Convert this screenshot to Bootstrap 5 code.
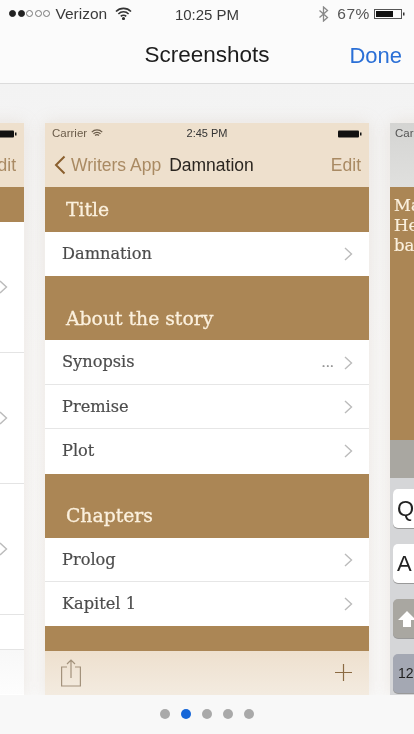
<!DOCTYPE html>
<html lang="en">

<head>
  <meta charset="UTF-8" />
  <meta name="viewport" content="width=device-width, initial-scale=1.0" />
  <title>Screenshots</title>
  <link href="https://cdn.jsdelivr.net/npm/bootstrap@5.3.5/dist/css/bootstrap.min.css" rel="stylesheet">
  <style>
    html, body { height: 100%; }

    body {
      margin: 0;
      background: #f8f8f8;
      font-family: 'Liberation Sans', Arial, sans-serif;
      color: #222;
      overflow: hidden;
    }

    .phone-page { height: 734px; filter: blur(0.45px); }

    /* top of the phone */
    .ios-head { height: 84px; background: #fbfbfb; border-bottom: 1px solid #dcdcdc; }
    .ios-status { height: 27px; padding: 0 9px 0 9px; font-size: 15.5px; color: #3a3a3a; }
    .sig-dot { width: 7px; height: 7px; border-radius: 50%; border: 1px solid #777; margin-right: 1.5px; }
    .sig-dot.on { background: #222; border-color: #222; }
    .ios-time { left: 0; right: 0; top: 4px; text-align: center; font-size: 15px; }
    .ios-title { height: 56px; font-size: 22.5px; color: #1c1c1c; }
    .ios-done { right: 12px; top: 50%; transform: translateY(-50%); font-size: 22px; color: #2a6fd6; text-decoration: none; }
    .batt-txt { font-size: 15.5px; letter-spacing: .6px; color: #555; }

    /* screenshot strip */
    .strip { height: 611px; padding-top: 39px; overflow: hidden; gap: 21px; background: linear-gradient(#f3f3f3, #f8f8f8 45%, #f9f9f9); }
    .shot { width: 324px; height: 572px; flex: 0 0 324px; background: #fff; overflow: hidden; box-shadow: 0 0 16px rgba(190, 165, 135, .22); }
    .shot-head { height: 64px; background: #eee0cd; }
    .shot-status { height: 20px; padding: 1px 7px 0; font-size: 11.5px; color: #6b5c4a; }
    .shot-time { left: 0; right: 0; top: 2px; text-align: center; color: #333; font-size: 11px; }
    .shot-nav { height: 44px; padding: 0 8px; font-size: 17.5px; }
    .shot-back { color: #a98a63; }
    .shot-title { color: #2a2520; }
    .shot-edit { color: #a98a63; }
    .tan-band { background: #ab8655; color: #fbf0dd; font-family: 'DejaVu Serif', serif; font-size: 18.8px; -webkit-text-stroke: .3px #fbf0dd; padding-left: 21px; display: flex; align-items: flex-end; }
    .band-s { height: 45px; padding-bottom: 8px; }
    .band-l { height: 64px; padding-bottom: 7px; }
    .band-e { height: 24.4px; }
    .story-row { height: 44.4px; padding: 0 16px 0 17px; background: #fff; font-family: 'DejaVu Serif', serif; font-size: 16.2px; -webkit-text-stroke: .2px #4c4c4c; color: #4c4c4c; }
    .story-sep { box-shadow: inset 0 -1px 0 #e6e6e6; }
    .story-list .list-group-item { border: 0; border-radius: 0; }
    .shot-foot { height: 44.2px; padding: 0 16px; background: linear-gradient(#eee0ce, #f3ebe0); }
    .more-dots { color: #999; font-size: 13px; margin-right: 10px; }

    /* neighbours */
    .left-band { height: 35px; }
    .left-rows .lr { height: 131px; border-bottom: 1px solid #e4e4e4; padding: 0 16px 0 0; }
    .left-rows .lr-end { height: 35px; border-bottom: 1px solid #e4e4e4; }
    .left-foot { height: 44px; background: linear-gradient(#f8f8f8, #fdfdfd); }
    .right-head { background: linear-gradient(#d4d4d2, #e0e0de); }
    .right-head .shot-status { color: #555; padding-left: 5px; }
    .right-body { background: #ab8655; color: #fbf0dd; height: 253px; font-family: 'DejaVu Serif', serif; font-size: 16.5px; -webkit-text-stroke: .2px #fbf0dd; line-height: 20px; padding: 9px 0 0 4px; }
    .right-grey { height: 38px; background: #a9a7a1; }
    .right-keys { height: 217px; background: #d5d6d8; padding: 11px 0 0 3px; }
    .kb-key { width: 60px; height: 39px; border-radius: 5px; background: #fff; margin-bottom: 16px; font-size: 22px; color: #222; padding-left: 4px; box-shadow: 0 1px 0 #999; }
    .kb-shift { background: #a9a7a1; }
    .kb-num { background: #a4a8b3; font-size: 14px; padding-left: 5px; }

    /* pager */
    .pager { height: 39px; gap: 11px; padding-bottom: 2px; }
    .pg-dot { width: 10px; height: 10px; border-radius: 50%; background: #a9a9a9; }
    .pg-dot.on { background: #1566d8; }
  </style>
</head>

<body>
  <div class="phone-page d-flex flex-column">

    <!-- status + title -->
    <header class="ios-head">
      <div class="ios-status d-flex align-items-center position-relative">
        <span class="sig-dot on"></span><span class="sig-dot on"></span><span class="sig-dot"></span><span class="sig-dot"></span><span class="sig-dot"></span>
        <span class="ms-1">Verizon</span>
        <svg class="ms-2" width="17" height="13" viewBox="0 0 17 13" fill="none" stroke="#333" stroke-width="1.6"><path d="M1 4.5a10.5 10.5 0 0 1 15 0M3.4 7a7 7 0 0 1 10.2 0M5.8 9.4a3.6 3.6 0 0 1 5.4 0"/><circle cx="8.5" cy="11.5" r="0.8" fill="#333"/></svg>
        <span class="ios-time position-absolute">10:25 PM</span>
        <svg class="ms-auto me-2" width="11" height="16" viewBox="0 0 11 16" fill="none" stroke="#888" stroke-width="1.3"><path d="M1.5 4.5l8 7-4 3.5V1l4 3.5-8 7"/></svg>
        <span class="batt-txt me-1">67%</span>
        <svg width="31" height="12" viewBox="0 0 31 12"><rect x="0.5" y="1.5" width="27" height="9" fill="none" stroke="#555"/><rect x="2" y="3" width="17" height="6" fill="#111"/><rect x="29" y="4.5" width="1.5" height="3" fill="#333"/></svg>
      </div>
      <div class="ios-title d-flex align-items-center justify-content-center position-relative">
        Screenshots
        <a class="ios-done position-absolute" href="#">Done</a>
      </div>
    </header>

    <!-- screenshots -->
    <div class="strip d-flex justify-content-center">

      <section class="shot">
        <div class="shot-head">
          <div class="shot-status d-flex align-items-center justify-content-end">
            <svg width="24" height="8" viewBox="0 0 24 8"><rect x="0" y="0.5" width="21" height="7" rx="1" fill="#111"/><rect x="22" y="2.5" width="1.5" height="3" fill="#111"/></svg>
          </div>
          <div class="shot-nav d-flex align-items-center justify-content-end"><span class="shot-edit">Edit</span></div>
        </div>
        <div class="tan-band left-band"></div>
        <div class="left-rows">
          <div class="lr d-flex align-items-center justify-content-end"><svg width="9" height="14" viewBox="0 0 9 14" fill="none" stroke="#bbb" stroke-width="1.4"><path d="M1 1l6.5 6L1 13"/></svg></div>
          <div class="lr d-flex align-items-center justify-content-end"><svg width="9" height="14" viewBox="0 0 9 14" fill="none" stroke="#bbb" stroke-width="1.4"><path d="M1 1l6.5 6L1 13"/></svg></div>
          <div class="lr d-flex align-items-center justify-content-end"><svg width="9" height="14" viewBox="0 0 9 14" fill="none" stroke="#bbb" stroke-width="1.4"><path d="M1 1l6.5 6L1 13"/></svg></div>
          <div class="lr-end"></div>
        </div>
        <div class="left-foot"></div>
      </section>

      <section class="shot">
        <div class="shot-head">
          <div class="shot-status d-flex align-items-center position-relative">
            <span>Carrier</span>
            <svg class="ms-1" width="12" height="9" viewBox="0 0 17 13" fill="none" stroke="#6b5c4a" stroke-width="1.8"><path d="M1 4.5a10.5 10.5 0 0 1 15 0M3.4 7a7 7 0 0 1 10.2 0M5.8 9.4a3.6 3.6 0 0 1 5.4 0"/></svg>
            <span class="shot-time position-absolute">2:45 PM</span>
            <svg class="ms-auto" width="24" height="8" viewBox="0 0 24 8"><rect x="0" y="0.5" width="21" height="7" rx="1" fill="#111"/><rect x="22" y="2.5" width="1.5" height="3" fill="#111"/></svg>
          </div>
          <div class="shot-nav d-flex align-items-center">
            <svg width="14" height="20" viewBox="0 0 14 20" fill="none" stroke="#8a5f2e" stroke-width="2"><path d="M11.5 1.5L3 10l8.5 8.5"/></svg>
            <span class="shot-back ms-1">Writers App</span>
            <span class="shot-title ms-2">Damnation</span>
            <span class="shot-edit ms-auto">Edit</span>
          </div>
        </div>

        <div class="tan-band band-s">Title</div>
        <div class="story-list list-group list-group-flush">
          <div class="list-group-item story-row d-flex align-items-center">Damnation<svg class="ms-auto" width="9" height="14" viewBox="0 0 9 14" fill="none" stroke="#bbb" stroke-width="1.4"><path d="M1 1l6.5 6L1 13"/></svg></div>
        </div>
        <div class="tan-band band-l">About the story</div>
        <div class="story-list list-group list-group-flush">
          <div class="list-group-item story-row story-sep d-flex align-items-center">Synopsis<span class="more-dots ms-auto">...</span><svg width="9" height="14" viewBox="0 0 9 14" fill="none" stroke="#bbb" stroke-width="1.4"><path d="M1 1l6.5 6L1 13"/></svg></div>
          <div class="list-group-item story-row story-sep d-flex align-items-center">Premise<svg class="ms-auto" width="9" height="14" viewBox="0 0 9 14" fill="none" stroke="#bbb" stroke-width="1.4"><path d="M1 1l6.5 6L1 13"/></svg></div>
          <div class="list-group-item story-row d-flex align-items-center">Plot<svg class="ms-auto" width="9" height="14" viewBox="0 0 9 14" fill="none" stroke="#bbb" stroke-width="1.4"><path d="M1 1l6.5 6L1 13"/></svg></div>
        </div>
        <div class="tan-band band-l">Chapters</div>
        <div class="story-list list-group list-group-flush">
          <div class="list-group-item story-row story-sep d-flex align-items-center">Prolog<svg class="ms-auto" width="9" height="14" viewBox="0 0 9 14" fill="none" stroke="#bbb" stroke-width="1.4"><path d="M1 1l6.500 6L1 13"/></svg></div>
          <div class="list-group-item story-row d-flex align-items-center">Kapitel 1<svg class="ms-auto" width="9" height="14" viewBox="0 0 9 14" fill="none" stroke="#bbb" stroke-width="1.4"><path d="M1 1l6.5 6L1 13"/></svg></div>
        </div>
        <div class="tan-band band-e"></div>

        <div class="shot-foot d-flex align-items-center justify-content-between">
          <svg width="20" height="28" viewBox="0 0 20 28" fill="none" stroke="#a3927c" stroke-width="1.2"><path d="M6 8H.6v19h18.800V8H14M10 19V1M6 5l4-4 4 4"/></svg>
          <svg width="19" height="19" viewBox="0 0 19 19" fill="none" stroke="#8a6a42" stroke-width="1.2"><path d="M9.5 1v17M1 9.500h17"/></svg>
        </div>
      </section>

      <section class="shot">
        <div class="shot-head right-head">
          <div class="shot-status d-flex align-items-center"><span>Carrier</span></div>
        </div>
        <div class="right-body">Mary<br>Hello<br>back</div>
        <div class="right-grey"></div>
        <div class="right-keys">
          <div class="kb-key d-flex align-items-center">Q</div>
          <div class="kb-key d-flex align-items-center">A</div>
          <div class="kb-key kb-shift d-flex align-items-center"><svg width="20" height="18" viewBox="0 0 20 18" fill="#fff"><path d="M10 1l9 9h-5v7H6v-7H1z"/></svg></div>
          <div class="kb-key kb-num d-flex align-items-center">123</div>
        </div>
      </section>
    </div>

    <!-- page dots -->
    <div class="pager d-flex align-items-center justify-content-center">
      <span class="pg-dot"></span><span class="pg-dot on"></span><span class="pg-dot"></span><span class="pg-dot"></span><span class="pg-dot"></span>
    </div>
  </div>

  <script src="https://cdn.jsdelivr.net/npm/bootstrap@5.3.5/dist/js/bootstrap.bundle.min.js"></script>
</body>

</html>
